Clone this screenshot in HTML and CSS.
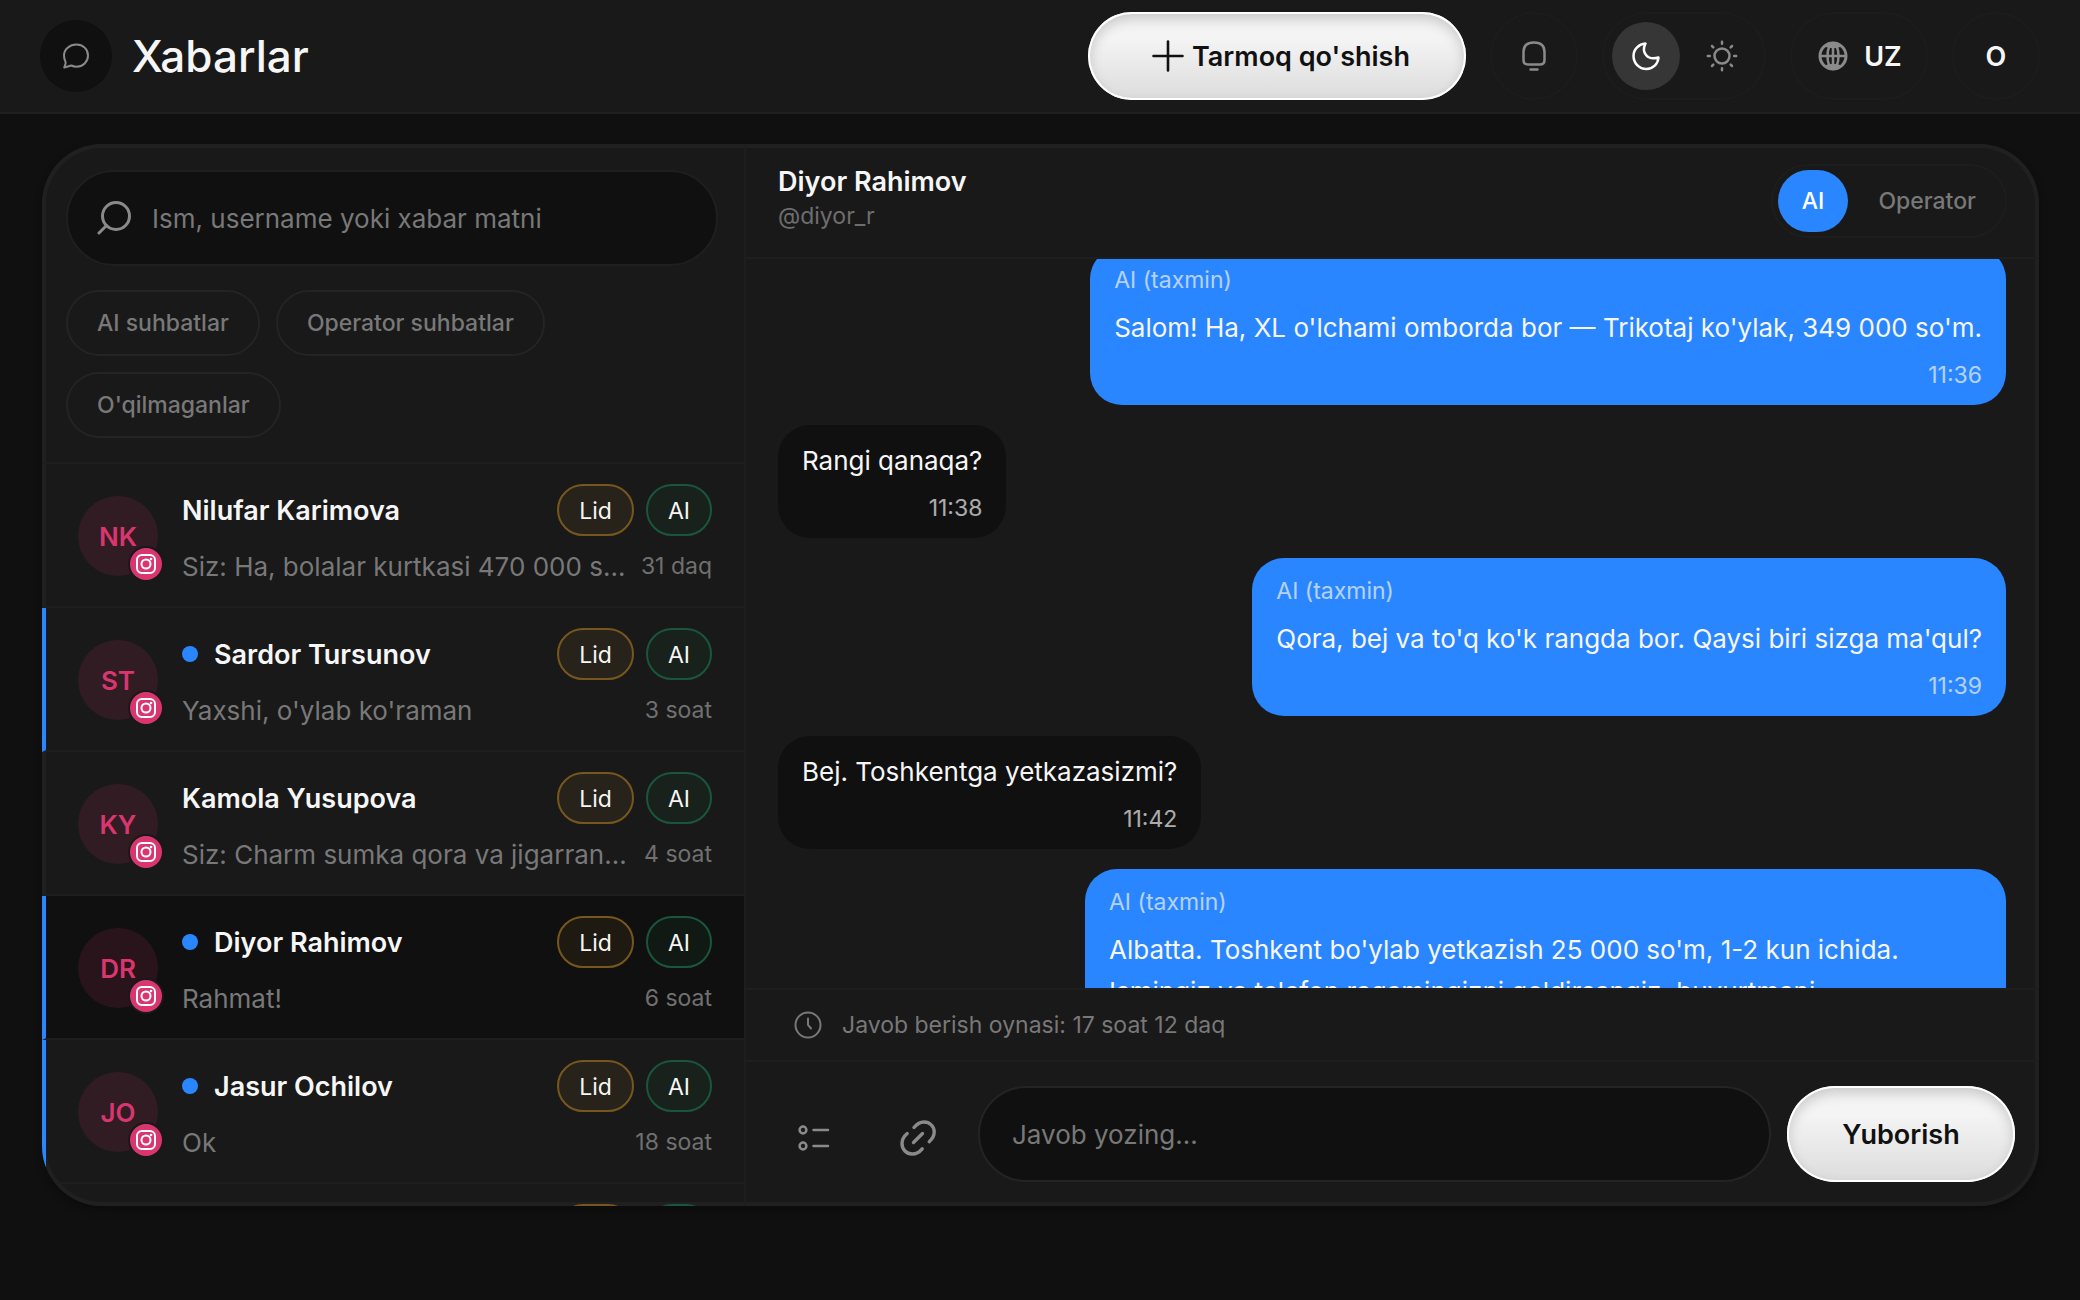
FILE: index.html
```html
<!DOCTYPE html>
<html lang="uz">
<head>
<meta charset="utf-8">
<meta name="viewport" content="width=device-width, initial-scale=1">
<title>Xabarlar</title>
<link rel="stylesheet" href="styles.css">
</head>
<body>
<svg class="sprite" aria-hidden="true">
  <symbol id="instagram" viewBox="0 0 24 24"><g fill="none" stroke="currentColor" stroke-width="2"><rect x="3" y="3" width="18" height="18" rx="5"/><circle cx="12" cy="12" r="4.5"/></g><circle cx="17" cy="7" r="1.3" fill="currentColor"/></symbol>
</svg>

<header class="topbar">
  <span class="topbar-icon">
    <svg width="28" height="28" viewBox="0 0 28 28" fill="none" stroke="currentColor" stroke-width="2" stroke-linejoin="round"><path d="M14.5 2.5c6.500 0 11.500 4.700 11.500 11s-5 11.200-11.500 11.200c-2 0-3.700-.4-5.200-1.200L2.200 25.500l1.300-3.600c.3-.8.200-1.500-.1-2.300C2.600 17.800 2 15.800 2 13.500 2 7.200 7.600 2.500 14.500 2.500z"/></svg>
  </span>
  <h1 class="title">Xabarlar</h1>
  <div class="actions">
    <button class="btn btn-add" type="button">
      <svg width="32" height="32" viewBox="0 0 32 32" stroke="currentColor" stroke-width="2.600" stroke-linecap="round"><path d="M16 1.500v29M1.500 16h29"/></svg>
      Tarmoq qo'shish
    </button>
    <button class="ghost ghost-round" type="button" aria-label="Bildirishnomalar">
      <svg width="32" height="32" viewBox="0 0 32 32" fill="none" stroke="currentColor" stroke-width="2.500" stroke-linecap="round"><path d="M5.500 12C5.500 5.500 9.500 2.500 16 2.500S26.500 5.500 26.500 12v8c0 3-1.500 4.500-4.500 4.500H10c-3 0-4.500-1.500-4.500-4.500zM12.500 29.500h7"/></svg>
    </button>
    <div class="ghost theme">
      <button class="theme-btn active" type="button" aria-label="Tungi rejim">
        <svg width="30" height="30" viewBox="0 0 30 30" fill="none" stroke="currentColor" stroke-width="2.500" stroke-linejoin="round"><path d="M14.500 2.500C8 3 2.500 8 2.500 15S8 28 15.500 28c6.500 0 11.500-5 12-11.500-5.500 1.600-10 .6-12.500-2.500s-2.800-7-.5-11.500z"/></svg>
      </button>
      <button class="theme-btn" type="button" aria-label="Kunduzgi rejim">
        <svg width="32" height="32" viewBox="0 0 32 32" fill="none" stroke="currentColor" stroke-width="2.500" stroke-linecap="round"><circle cx="16" cy="16" r="7.500"/><path d="M16 1.800v2M16 28.200v2M1.800 16h2M28.200 16h2M6 6l1.300 1.300M24.700 24.700L26 26M26 6l-1.300 1.300M7.300 24.700L6 26"/></svg>
      </button>
    </div>
    <button class="ghost lang" type="button">
      <svg width="30" height="30" viewBox="0 0 30 30" fill="none" stroke="currentColor" stroke-width="2.500"><circle cx="15" cy="15" r="13" stroke-width="3"/><ellipse cx="15" cy="15" rx="5.500" ry="13"/><path d="M2 15h26M15 2v26"/><path d="M6 5c5 3 13 3 18 0L15 2zM6 25c5-3 13-3 18 0l-9 3z" fill="currentColor" stroke="none"/></svg>
      UZ
    </button>
    <button class="ghost ghost-round" type="button">O</button>
  </div>
</header>

<main class="page">
  <div class="card">
    <aside class="sidebar">
      <div class="filters">
        <label class="search">
          <svg width="34" height="34" viewBox="0 0 34 34" fill="none" stroke="currentColor" stroke-width="3" stroke-linecap="round"><circle cx="19" cy="15" r="13.500"/><path d="M9.500 24.500L2 32"/></svg>
          <input type="text" placeholder="Ism, username yoki xabar matni" aria-label="Qidiruv">
        </label>
        <div class="chips">
          <button class="chip" type="button">AI suhbatlar</button>
          <button class="chip" type="button">Operator suhbatlar</button>
          <button class="chip" type="button">O'qilmaganlar</button>
        </div>
      </div>
      <ul class="list">
        <li class="row">
          <div class="avatar">NK<span class="badge"><svg width="24" height="24"><use href="#instagram"/></svg></span></div>
          <div class="info">
            <div class="line"><span class="name">Nilufar Karimova</span><span class="tag lid">Lid</span><span class="tag ai">AI</span></div>
            <div class="line"><span class="preview">Siz: Ha, bolalar kurtkasi 470 000 so'm</span><time class="time">31 daq</time></div>
          </div>
        </li>
        <li class="row unread">
          <div class="avatar">ST<span class="badge"><svg width="24" height="24"><use href="#instagram"/></svg></span></div>
          <div class="info">
            <div class="line"><span class="name">Sardor Tursunov</span><span class="tag lid">Lid</span><span class="tag ai">AI</span></div>
            <div class="line"><span class="preview">Yaxshi, o'ylab ko'raman</span><time class="time">3 soat</time></div>
          </div>
        </li>
        <li class="row">
          <div class="avatar">KY<span class="badge"><svg width="24" height="24"><use href="#instagram"/></svg></span></div>
          <div class="info">
            <div class="line"><span class="name">Kamola Yusupova</span><span class="tag lid">Lid</span><span class="tag ai">AI</span></div>
            <div class="line"><span class="preview">Siz: Charm sumka qora va jigarrang rangda</span><time class="time">4 soat</time></div>
          </div>
        </li>
        <li class="row unread selected">
          <div class="avatar">DR<span class="badge"><svg width="24" height="24"><use href="#instagram"/></svg></span></div>
          <div class="info">
            <div class="line"><span class="name">Diyor Rahimov</span><span class="tag lid">Lid</span><span class="tag ai">AI</span></div>
            <div class="line"><span class="preview">Rahmat!</span><time class="time">6 soat</time></div>
          </div>
        </li>
        <li class="row unread">
          <div class="avatar">JO<span class="badge"><svg width="24" height="24"><use href="#instagram"/></svg></span></div>
          <div class="info">
            <div class="line"><span class="name">Jasur Ochilov</span><span class="tag lid">Lid</span><span class="tag ai">AI</span></div>
            <div class="line"><span class="preview">Ok</span><time class="time">18 soat</time></div>
          </div>
        </li>
        <li class="row">
          <div class="info">
            <div class="line"><span class="name"></span><span class="tag lid">Lid</span><span class="tag ai">AI</span></div>
          </div>
        </li>
      </ul>
    </aside>

    <section class="chat">
      <div class="chat-head">
        <div class="who">
          <h2 class="who-name">Diyor Rahimov</h2>
          <span class="handle">@diyor_r</span>
        </div>
        <div class="mode">
          <button class="mode-btn active" type="button">AI</button>
          <button class="mode-btn" type="button">Operator</button>
        </div>
      </div>

      <div class="thread">
        <article class="msg out"><span class="author">AI (taxmin)</span><p>Salom! Ha, XL o'lchami omborda bor — Trikotaj ko'ylak, 349 000 so'm.</p><time>11:36</time></article>
        <article class="msg in"><p>Rangi qanaqa?</p><time>11:38</time></article>
        <article class="msg out"><span class="author">AI (taxmin)</span><p>Qora, bej va to'q ko'k rangda bor. Qaysi biri sizga ma'qul?</p><time>11:39</time></article>
        <article class="msg in"><p>Bej. Toshkentga yetkazasizmi?</p><time>11:42</time></article>
        <article class="msg out"><span class="author">AI (taxmin)</span><p>Albatta. Toshkent bo'ylab yetkazish 25 000 so'm, 1-2 kun ichida. Ismingiz va telefon raqamingizni qoldirsangiz, buyurtmani</p></article>
      </div>

      <div class="window-info">
        <svg width="28" height="28" viewBox="0 0 28 28" fill="none" stroke="currentColor" stroke-width="2" stroke-linecap="round"><circle cx="14" cy="14" r="12.500"/><path d="M14 7.500V14l3 3.500"/></svg>
        Javob berish oynasi: 17 soat 12 daq
      </div>

      <form class="composer">
        <button class="tool" type="button" aria-label="Shablonlar">
          <svg width="32" height="32" viewBox="0 0 32 32" fill="none" stroke="currentColor" stroke-width="2.500" stroke-linecap="round"><circle cx="5" cy="8" r="3.400"/><circle cx="5" cy="24" r="3.400"/><path d="M15.500 8H30M15.500 24H30"/></svg>
        </button>
        <button class="tool" type="button" aria-label="Havola">
          <svg width="36" height="36" viewBox="0 0 36 36" fill="none" stroke="currentColor" stroke-width="3.400" stroke-linecap="round"><path d="M13.500 22.500l9-9M14 7.500C17 3.800 20.500 2 24 2c5.800 0 10.200 4.400 10.200 10 0 3.600-1.700 6.800-5 9.700M7.200 13.500C3.800 16.400 2 19.600 2 23.500 2 29.500 6.400 34 12.200 34c3.800 0 7.200-1.800 10-5.200"/></svg>
        </button>
        <input class="reply" type="text" placeholder="Javob yozing..." aria-label="Javob">
        <button class="btn btn-send" type="button">Yuborish</button>
      </form>
    </section>
  </div>
</main>
</body>
</html>
```

FILE: styles.css
```css
:root {
  --bg: #101010;
  --surface: #191919;
  --line: #1e1e1e;
  --ring: #202020;
  --text: #f6f6f6;
  --muted: #787878;
  --blue: #2a86ff;
  --pink: #d9366f;
}

* { box-sizing: border-box; }

body {
  margin: 0;
  height: 100vh;
  display: flex;
  flex-direction: column;
  background: var(--bg);
  color: var(--text);
  font-family: Inter, "Liberation Sans", sans-serif;
  font-size: 26px;
  overflow: hidden;
}

button, input {
  font: inherit;
  color: inherit;
  border: 0;
  background: none;
  padding: 0;
}

h1, h2, p, ul { margin: 0; padding: 0; }
svg { display: block; flex: none; }
.sprite { position: absolute; width: 0; height: 0; }

/* Top bar */
.topbar {
  display: flex;
  align-items: center;
  padding: 12px 40px;
  background: var(--surface);
  border-bottom: 2px solid #202020;
}

.topbar-icon {
  display: grid;
  place-items: center;
  width: 72px;
  height: 72px;
  border-radius: 50%;
  background: var(--bg);
  color: #8a8a8a;
}

.title {
  margin-left: 20px;
  font-size: 44px;
  line-height: 56px;
  font-weight: 500;
}

.actions {
  display: flex;
  gap: 24px;
  margin-left: auto;
}

.btn {
  display: flex;
  align-items: center;
  justify-content: center;
  border-radius: 48px;
  color: #111;
  font-weight: 600;
  background: linear-gradient(#f4f4f4 30%, #dcdcdc);
  box-shadow: inset 0 0 0 2px #fff, inset 0 6px 14px rgba(0, 0, 0, .2);
}

.btn-add { gap: 8px; width: 378px; height: 88px; padding-left: 8px; font-size: 27px; }

.ghost {
  display: flex;
  align-items: center;
  justify-content: center;
  height: 88px;
  border: 2px solid #1c1c1c;
  border-radius: 44px;
  font-size: 27px;
  font-weight: 600;
}

.ghost-round { width: 88px; }
.ghost-round svg, .lang svg { color: #8a8a8a; }
.theme { gap: 8px; padding: 0 8px; }

.theme-btn {
  display: grid;
  place-items: center;
  width: 68px;
  height: 68px;
  border-radius: 50%;
  color: #8a8a8a;
}

.theme-btn.active { background: #363636; color: #fff; }
.lang { gap: 16px; width: 138px; padding-left: 2px; }

/* Card */
.page {
  flex: 1;
  min-height: 0;
  display: flex;
  padding: 30px 41px 94px 42px;
}

.card {
  flex: 1;
  min-width: 0;
  display: grid;
  grid-template-columns: 704px minmax(0, 1fr);
  border-radius: 60px;
  overflow: hidden;
  background: var(--surface);
  box-shadow: inset 0 0 0 4px var(--ring), 0 4px 8px rgba(0, 0, 0, .3);
}

.sidebar {
  display: flex;
  flex-direction: column;
  min-height: 0;
  border-right: 2px solid var(--line);
}

.filters {
  display: flex;
  flex-direction: column;
  gap: 24px;
  padding: 26px 26px 24px 24px;
  border-bottom: 2px solid var(--line);
}

.search {
  display: flex;
  align-items: center;
  gap: 21px;
  height: 96px;
  padding: 0 29px;
  border: 2px solid #1f1f1f;
  border-radius: 48px;
  background: var(--bg);
  color: #8a8a8a;
}

.search input { flex: 1; min-width: 0; outline: 0; }
::placeholder { color: var(--muted); opacity: 1; }

.chips { display: flex; flex-wrap: wrap; gap: 16px; }

.chip {
  height: 66px;
  padding: 0 29px;
  border: 2px solid #242424;
  border-radius: 33px;
  color: var(--muted);
  font-size: 23px;
  font-weight: 500;
}

/* Conversation list */
.list { flex: 1; min-height: 0; overflow: hidden; list-style: none; }

.row {
  display: flex;
  gap: 24px;
  height: 144px;
  padding: 20px 32px 0;
  border-left: 4px solid transparent;
  border-bottom: 2px solid var(--line);
}

.row.unread { border-left-color: var(--blue); }
.row.selected { background: var(--bg); background-clip: padding-box; }

.avatar {
  position: relative;
  flex: none;
  display: grid;
  place-items: center;
  width: 80px;
  height: 80px;
  margin-top: 12px;
  border-radius: 50%;
  background: rgba(217, 54, 111, .13);
  color: var(--pink);
  font-weight: 600;
}

.badge {
  position: absolute;
  right: -4px;
  bottom: -4px;
  display: grid;
  place-items: center;
  width: 32px;
  height: 32px;
  border-radius: 50%;
  background: var(--pink);
  color: #fff;
  box-shadow: 0 0 0 2px var(--surface);
}

.info { flex: 1; min-width: 0; }
.line { display: flex; align-items: center; height: 52px; }
.line + .line { margin-top: 4px; }

.name {
  flex: 1;
  display: flex;
  align-items: center;
  gap: 16px;
  font-size: 27px;
  font-weight: 600;
}

.unread .name::before {
  content: "";
  width: 16px;
  height: 16px;
  border-radius: 50%;
  background: var(--blue);
}

.tag {
  height: 52px;
  margin-left: 12px;
  padding: 0 20px;
  border: 2px solid;
  border-radius: 26px;
  font-size: 23px;
  line-height: 50px;
}

.lid { border-color: #77571d; background: rgba(245, 165, 36, .07); }
.ai { border-color: #1a563d; background: rgba(23, 201, 100, .05); }

.preview {
  flex: 1;
  overflow: hidden;
  white-space: nowrap;
  text-overflow: ellipsis;
  color: var(--muted);
}

.time { margin-left: 12px; font-size: 23px; color: #707070; }

/* Chat */
.chat { display: flex; flex-direction: column; min-width: 0; min-height: 0; }

.chat-head {
  display: flex;
  justify-content: space-between;
  height: 115px;
  padding: 20px 32px 0;
  border-bottom: 2px solid var(--line);
}

.who-name { font-size: 27px; line-height: 36px; font-weight: 600; }
.handle { display: block; font-size: 23px; line-height: 32px; color: #6e6e6e; }

.mode {
  display: flex;
  align-items: center;
  gap: 6px;
  height: 74px;
  padding: 0 5px;
  border: 2px solid #1d1d1d;
  border-radius: 37px;
}

.mode-btn {
  height: 62px;
  padding: 0 24px;
  border-radius: 31px;
  color: var(--muted);
  font-size: 23px;
  font-weight: 500;
}

.mode-btn.active { background: var(--blue); color: #fff; }

/* The thread is scrolled a little past the top of its first message */
.thread {
  flex: 1;
  min-height: 0;
  display: flex;
  flex-direction: column;
  gap: 20px;
  padding: 0 33px 0 32px;
  overflow: hidden;
}

.msg {
  flex: none;
  display: flex;
  flex-direction: column;
  max-width: 75%;
  padding: 19px 24px 12px;
  border-radius: 32px;
}

.msg:first-child { margin-top: -12px; }
.msg.in { align-self: flex-start; padding-top: 15px; background: var(--bg); }
.msg.out { align-self: flex-end; background: var(--blue); }
.msg p { line-height: 42px; }

.author, .msg time { font-size: 23px; opacity: .68; }
.author { line-height: 28px; margin-bottom: 13px; }
.msg time { align-self: flex-end; line-height: 36px; margin-top: 8px; }

.window-info {
  display: flex;
  align-items: center;
  gap: 20px;
  height: 72px;
  padding: 0 48px;
  border-top: 2px solid var(--line);
  font-size: 23px;
  color: var(--muted);
}

.composer {
  display: flex;
  align-items: flex-end;
  gap: 16px;
  padding: 24px;
  border-top: 2px solid var(--line);
}

.tool { display: grid; place-items: center; width: 88px; height: 88px; color: #8a8a8a; }

.reply {
  flex: 1;
  min-width: 0;
  height: 96px;
  padding: 0 32px;
  border: 2px solid #242424;
  border-radius: 48px;
  background: var(--bg);
}

.btn-send { width: 228px; height: 96px; font-size: 27px; }
```
